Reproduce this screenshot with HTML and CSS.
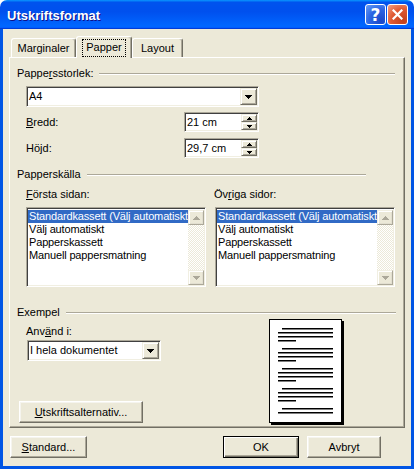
FILE: index.html
```html
<!DOCTYPE html>
<html lang="sv">
<head>
  <meta charset="UTF-8" />
  <title>Utskriftsformat</title>
  <link rel="stylesheet" href="styles.css">
</head>
<body>

  <div class="window">
    <!-- Titelrad -->
    <div class="titlebar">
      <span class="title">Utskriftsformat</span>
      <div class="caption-buttons">
        <span class="cap-btn help">?</span>
        <span class="cap-btn close">
          <svg width="11" height="11" viewBox="0 0 11 11"><path d="M1.5 1.5l8 8M9.5 1.5l-8 8" stroke="#fff" stroke-width="2.2" stroke-linecap="square"/></svg>
        </span>
      </div>
    </div>

    <div class="client">
      <!-- Flikar -->
      <div class="tabs">
        <div class="tab tab-margins">Marginaler</div>
        <div class="tab tab-paper active"><span class="focus">Papper</span></div>
        <div class="tab tab-layout">Layout</div>
      </div>

      <div class="panel">
        <div class="group-head head-size"><span>Pappe<u>r</u>sstorlek:</span><i class="rule"></i></div>
        <div class="combo combo-size">
          <span class="combo-value">A4</span>
          <span class="drop-btn"><svg width="7" height="4"><path d="M0 0h7v1h-1v1h-1v1h-1v1h-1v-1h-1v-1h-1v-1h-1z"/></svg></span>
        </div>

        <div class="field-row row-width">
          <span><u>B</u>redd:</span>
          <div class="spin">
            <span class="spin-value">21 cm</span>
            <span class="spin-btns">
              <span class="spin-btn"><svg width="5" height="3"><path d="M2 0h1v1h1v1h1v1h-5v-1h1v-1h1z"/></svg></span>
              <span class="spin-btn"><svg width="5" height="3"><path d="M0 0h5v1h-1v1h-1v1h-1v-1h-1v-1h-1z"/></svg></span>
            </span>
          </div>
        </div>
        <div class="field-row row-height">
          <span>Hö<u>j</u>d:</span>
          <div class="spin">
            <span class="spin-value">29,7 cm</span>
            <span class="spin-btns">
              <span class="spin-btn"><svg width="5" height="3"><path d="M2 0h1v1h1v1h1v1h-5v-1h1v-1h1z"/></svg></span>
              <span class="spin-btn"><svg width="5" height="3"><path d="M0 0h5v1h-1v1h-1v1h-1v-1h-1v-1h-1z"/></svg></span>
            </span>
          </div>
        </div>

        <div class="group-head head-source"><span>Papperskälla</span><i class="rule"></i></div>
        <div class="source-grid">
          <span><u>F</u>örsta sidan:</span>
          <span class="label-other">Öv<u>r</u>iga sidor:</span>

          <div class="listbox">
            <div class="list-items">
              <div class="list-item selected">Standardkassett (Välj automatiskt</div>
              <div class="list-item">Välj automatiskt</div>
              <div class="list-item">Papperskassett</div>
              <div class="list-item">Manuell pappersmatning</div>
            </div>
            <div class="scrollbar">
              <span class="sb-btn"><svg width="7" height="4"><path d="M3 0h1v1h1v1h1v1h1v1h-7v-1h1v-1h1v-1h1z"/></svg></span>
              <span class="sb-track"></span>
              <span class="sb-btn"><svg width="7" height="4"><path d="M0 0h7v1h-1v1h-1v1h-1v1h-1v-1h-1v-1h-1v-1h-1z"/></svg></span>
            </div>
          </div>

          <div class="listbox">
            <div class="list-items">
              <div class="list-item selected">Standardkassett (Välj automatiskt</div>
              <div class="list-item">Välj automatiskt</div>
              <div class="list-item">Papperskassett</div>
              <div class="list-item">Manuell pappersmatning</div>
            </div>
            <div class="scrollbar">
              <span class="sb-btn"><svg width="7" height="4"><path d="M3 0h1v1h1v1h1v1h1v1h-7v-1h1v-1h1v-1h1z"/></svg></span>
              <span class="sb-track"></span>
              <span class="sb-btn"><svg width="7" height="4"><path d="M0 0h7v1h-1v1h-1v1h-1v1h-1v-1h-1v-1h-1v-1h-1z"/></svg></span>
            </div>
          </div>
        </div>

        <div class="group-head head-example"><span>Exempel</span><i class="rule"></i></div>
        <div class="example">
          <div class="example-left">
            <div class="apply-label">Anv<u>ä</u>nd i:</div>
            <div class="combo combo-apply">
              <span class="combo-value">I hela dokumentet</span>
              <span class="drop-btn"><svg width="7" height="4"><path d="M0 0h7v1h-1v1h-1v1h-1v1h-1v-1h-1v-1h-1v-1h-1z"/></svg></span>
            </div>
            <div class="btn btn-options"><u>U</u>tskriftsalternativ...</div>
          </div>
          <div class="page-preview">
            <svg width="71" height="102" viewBox="0 0 71 102">
              <g fill="#000">
                <rect x="12" y="8" width="51" height="1.5"/>
                <rect x="8" y="12" width="55" height="1.5"/>
                <rect x="8" y="16" width="55" height="1.5"/>
                <rect x="8" y="20" width="18" height="1.5"/>

                <rect x="12" y="28" width="51" height="1.5"/>
                <rect x="8" y="32" width="55" height="1.5"/>
                <rect x="8" y="36" width="55" height="1.5"/>
                <rect x="8" y="40" width="18" height="1.5"/>

                <rect x="12" y="48" width="51" height="1.5"/>
                <rect x="8" y="52" width="55" height="1.5"/>
                <rect x="8" y="56" width="55" height="1.5"/>
                <rect x="8" y="60" width="18" height="1.5"/>

                <rect x="12" y="68" width="51" height="1.5"/>
                <rect x="8" y="72" width="55" height="1.5"/>
                <rect x="8" y="76" width="55" height="1.5"/>
                <rect x="8" y="80" width="18" height="1.5"/>

                <rect x="12" y="88" width="51" height="1.5"/>
                <rect x="8" y="92" width="55" height="1.5"/>
              </g>
            </svg>
          </div>
        </div>
      </div>

      <!-- Knappar -->
      <div class="footer">
        <div class="btn btn-standard"><u>S</u>tandard...</div>
        <div class="btn btn-ok default">OK</div>
        <div class="btn btn-cancel">Avbryt</div>
      </div>
    </div>
  </div>

</body>
</html>
```

FILE: styles.css
```css
body {
  margin: 0;
  background: #fff;
  font-family: "Liberation Sans", Arial, sans-serif;
  font-size: 11px;
  color: #000;
}

u {
  text-decoration-thickness: 1px;
  text-underline-offset: 1px;
}

.window {
  width: 414px;
  height: 469px;
  display: flex;
  flex-direction: column;
}

/* Titelrad */
.titlebar {
  height: 29px;
  flex: none;
  box-sizing: border-box;
  border-radius: 7px 7px 0 0;
  background: linear-gradient(180deg, #0997ff, #0053ee 8%, #0050ee 40%, #0066ff 88%, #0066ff 93%, #005bff 95%, #003dd7 96%, #003dd7);
  display: flex;
  align-items: center;
  padding: 0 6px 0 7px;
}

.title {
  flex: 1;
  color: #fff;
  font-weight: bold;
  font-size: 13px;
  padding-top: 2px;
  text-shadow: 1px 1px #0f1089;
}

.caption-buttons {
  display: flex;
  gap: 1px;
}

.cap-btn {
  width: 21px;
  height: 21px;
  box-sizing: border-box;
  border: 1px solid #fff;
  border-radius: 3px;
  display: flex;
  align-items: center;
  justify-content: center;
  color: #fff;
}

.help {
  background: radial-gradient(circle at 80% 85%, #1a47c8 0%, #2c66e4 55%, #6a9ef7 100%);
  font-weight: bold;
  font-size: 17px;
  font-family: "DejaVu Sans", sans-serif;
}

.close {
  background: radial-gradient(circle at 80% 85%, #c2401c 0%, #e05a34 55%, #f3a184 100%);
}

/* Klientyta */
.client {
  flex: 1;
  background: #ece9d8;
  border: 3px solid #0055e5;
  border-top: none;
  padding: 7px 0 0 6px;
}

.tabs {
  display: flex;
  align-items: flex-end;
  height: 21px;
  margin-left: 2px;
}

.tab {
  position: relative;
  z-index: 1;
  height: 19px;
  box-sizing: border-box;
  border: 1px solid #fff;
  border-right-color: #716f64;
  border-bottom: none;
  border-radius: 3px 3px 0 0;
  box-shadow: inset -1px 0 #aca899;
  background: #ece9d8;
  display: flex;
  justify-content: center;
  padding-top: 3px;
}

.tab-margins { width: 65px; }
.tab-paper { width: 56px; }
.tab-layout { width: 51px; }

.tab.active {
  height: 22px;
  margin-bottom: -1px;
  padding-top: 3px;
}

.focus {
  outline: 1px dotted #000;
  padding: 1px 3px 2px;
  height: 13px;
  line-height: 13px;
}

.panel {
  width: 396px;
  height: 371px;
  box-sizing: border-box;
  border: 1px solid #fff;
  border-right-color: #716f64;
  border-bottom-color: #716f64;
  box-shadow: inset -1px -1px #aca899;
  padding-top: 9px;
}

/* Grupprubriker */
.group-head {
  display: flex;
  align-items: center;
  height: 13px;
  line-height: 13px;
  margin-left: 7px;
}

.group-head .rule {
  flex: 1;
  border-top: 1px solid #aca899;
  border-bottom: 1px solid #fff;
  margin-left: 6px;
  margin-top: 1px;
}

.head-size { margin-right: 9px; }
.head-source { margin-right: 38px; margin-top: 10px; }
.head-example { margin-right: 8px; margin-top: 19px; }

/* Sänkta fält */
.combo,
.spin,
.listbox {
  box-sizing: border-box;
  border: 1px solid;
  border-color: #aca899 #fff #fff #aca899;
  box-shadow: inset 1px 1px #404040, inset -1px -1px #f1efe2;
  background: #fff;
  padding: 1px;
}

.combo {
  display: flex;
  height: 21px;
}

.combo-size {
  width: 233px;
  margin: 6px 0 0 16px;
}

.combo-value {
  flex: 1;
  line-height: 17px;
  padding-left: 1px;
  white-space: nowrap;
}

.drop-btn,
.spin-btn,
.sb-btn {
  background: #ece9d8;
  box-sizing: border-box;
  border: 1px solid;
  border-color: #f1efe2 #716f64 #716f64 #f1efe2;
  box-shadow: inset 1px 1px #fff, inset -1px -1px #aca899;
  display: flex;
  align-items: center;
  justify-content: center;
}

.drop-btn {
  width: 17px;
}

.field-row {
  display: flex;
  align-items: center;
  justify-content: space-between;
  width: 233px;
  margin-left: 16px;
}

.row-width { margin-top: 5px; }
.row-height { margin-top: 6px; }

.spin {
  width: 75px;
  height: 20px;
  display: flex;
}

.spin-value {
  flex: 1;
  line-height: 16px;
  padding-left: 1px;
}

.spin-btns {
  width: 16px;
  display: flex;
  flex-direction: column;
}

.spin-btn {
  flex: 1;
}

/* Papperskälla */
.source-grid {
  display: grid;
  grid-template-columns: 180px 180px;
  column-gap: 9px;
  row-gap: 6px;
  margin: 7px 0 0 16px;
  line-height: 13px;
}

.label-other {
  margin-left: -1px;
}

.listbox {
  height: 80px;
  display: flex;
}

.list-items {
  flex: 1;
  min-width: 0;
  overflow: hidden;
  padding-top: 1px;
}

.list-item {
  height: 13px;
  line-height: 13px;
  padding-left: 1px;
  white-space: nowrap;
  letter-spacing: -0.15px;
}

.list-item.selected {
  background: #316ac5;
  color: #fff;
}

.scrollbar {
  width: 16px;
  flex: none;
  display: flex;
  flex-direction: column;
  padding-top: 1px;
}

.sb-btn {
  height: 15px;
  border-color: #f1efe2 #aca899 #aca899 #f1efe2;
  box-shadow: inset 1px 1px #fff, inset -1px -1px #e2dfd0;
}

.sb-btn svg {
  fill: #aca899;
}

.sb-track {
  flex: 1;
  background: repeating-conic-gradient(#fff 0 25%, #ece9d8 0 50%) 0 0 / 2px 2px;
}

/* Exempel */
.example {
  display: flex;
}

.example-left {
  width: 259px;
}

.apply-label {
  line-height: 13px;
  margin: 6px 0 0 16px;
}

.combo-apply {
  width: 134px;
  margin: 2px 0 0 17px;
}

.page-preview {
  width: 73px;
  height: 104px;
  box-sizing: border-box;
  border: 1px solid #000;
  background: #fff;
  box-shadow: 2px 2px 0 #000;
}

.page-preview svg {
  display: block;
}

/* Knappar */
.btn {
  height: 22px;
  box-sizing: border-box;
  border: 1px solid;
  border-color: #fff #716f64 #716f64 #fff;
  box-shadow: inset -1px -1px #aca899, inset 1px 1px #f5f4ee;
  background: #ece9d8;
  display: flex;
  align-items: center;
  justify-content: center;
}

.btn.default {
  border: 1px solid #000;
  box-shadow: inset 1px 1px #fff, inset -1px -1px #716f64, inset -2px -2px #aca899;
}

.btn-options {
  width: 124px;
  margin: 40px 0 0 9px;
}

.footer {
  display: flex;
  margin-top: 8px;
}

.btn-standard {
  width: 77px;
  margin-left: 1px;
}

.btn-ok {
  width: 76px;
  margin-left: auto;
}

.btn-cancel {
  width: 74px;
  margin: 0 30px 0 8px;
}
```
